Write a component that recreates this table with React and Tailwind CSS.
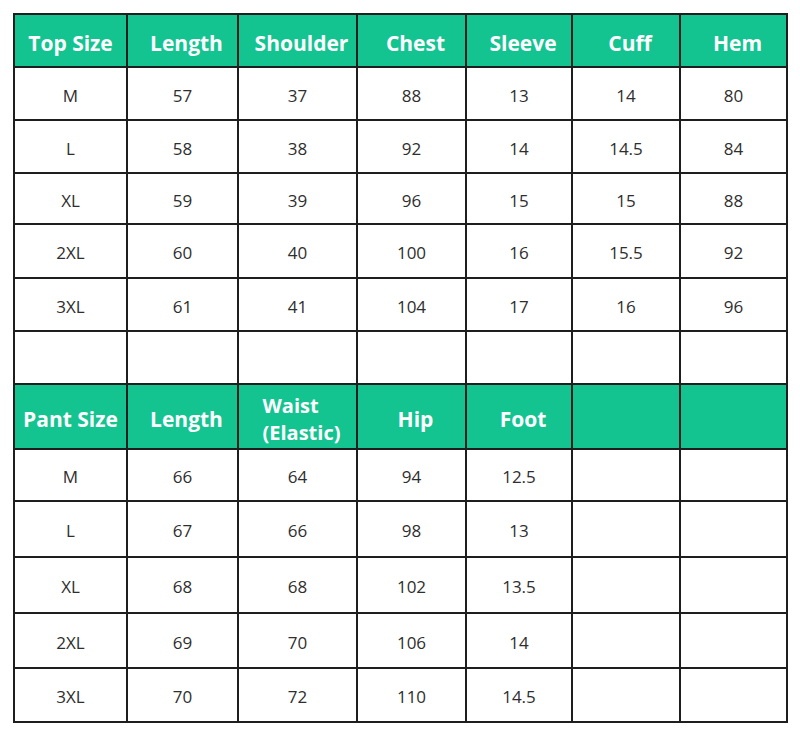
import React from "react";

const colWidths = ["w-[113px]", "w-[111px]", "w-[119px]", "w-[109px]", "w-[106px]", "w-[108px]", "w-[107px]"];

const topHeader = ["Top Size", "Length", "Shoulder", "Chest", "Sleeve", "Cuff", "Hem"];
const topRows = [
  { h: "h-[53px]", cells: ["M", "57", "37", "88", "13", "14", "80"] },
  { h: "h-[53px]", cells: ["L", "58", "38", "92", "14", "14.5", "84"] },
  { h: "h-[51px]", cells: ["XL", "59", "39", "96", "15", "15", "88"] },
  { h: "h-[54px]", cells: ["2XL", "60", "40", "100", "16", "15.5", "92"] },
  { h: "h-[53px]", cells: ["3XL", "61", "41", "104", "17", "16", "96"] },
  { h: "h-[53px]", cells: ["", "", "", "", "", "", ""] },
];

const pantRows = [
  { h: "h-[52px]", cells: ["M", "66", "64", "94", "12.5", "", ""] },
  { h: "h-[56px]", cells: ["L", "67", "66", "98", "13", "", ""] },
  { h: "h-[56px]", cells: ["XL", "68", "68", "102", "13.5", "", ""] },
  { h: "h-[55px]", cells: ["2XL", "69", "70", "106", "14", "", ""] },
  { h: "h-[54px]", cells: ["3XL", "70", "72", "110", "14.5", "", ""] },
];

const HeaderRow = ({ height, children }) => (
  <div className={`flex ${height} bg-[#13c491]`}>{children}</div>
);

const HeaderCell = ({ i, children }) => (
  <div
    className={`${colWidths[i]} shrink-0 border-r-2 border-b-2 border-[#1e1e1e] flex items-center justify-center pt-[6px] ${
      i === 0 ? "" : "pl-[8px]"
    } text-white font-bold text-[21px] leading-[25px]`}
  >
    {children}
  </div>
);

const BodyRow = ({ row }) => (
  <div className={`flex ${row.h} bg-white`}>
    {row.cells.map((c, i) => (
      <div
        key={i}
        className={`${colWidths[i]} shrink-0 border-r-2 border-b-2 border-[#1e1e1e] flex items-center justify-center pt-[4px] text-[17px] text-[#2e2e2e]`}
      >
        {c}
      </div>
    ))}
  </div>
);

export default function App() {
  return (
    <div className="w-[800px] h-[751px] bg-white pt-[13px] pl-[13px]" style={{ fontFamily: '"Open Sans", "Liberation Sans", sans-serif' }}>
      <div className="inline-flex flex-col border-l-2 border-t-2 border-[#1e1e1e]">
        <HeaderRow height="h-[53px]">
          {topHeader.map((t, i) => (
            <HeaderCell key={i} i={i}>
              {t}
            </HeaderCell>
          ))}
        </HeaderRow>
        {topRows.map((r, i) => (
          <BodyRow key={i} row={r} />
        ))}

        <HeaderRow height="h-[65px]">
          <HeaderCell i={0}>Pant Size</HeaderCell>
          <HeaderCell i={1}>Length</HeaderCell>
          <HeaderCell i={2}>
            <span className="flex flex-col items-start text-[20px] leading-[27px] -mt-[2px]">
              <span>Waist</span>
              <span>(Elastic)</span>
            </span>
          </HeaderCell>
          <HeaderCell i={3}>Hip</HeaderCell>
          <HeaderCell i={4}>Foot</HeaderCell>
          <HeaderCell i={5}></HeaderCell>
          <HeaderCell i={6}></HeaderCell>
        </HeaderRow>
        {pantRows.map((r, i) => (
          <BodyRow key={i} row={r} />
        ))}
      </div>
    </div>
  );
}
